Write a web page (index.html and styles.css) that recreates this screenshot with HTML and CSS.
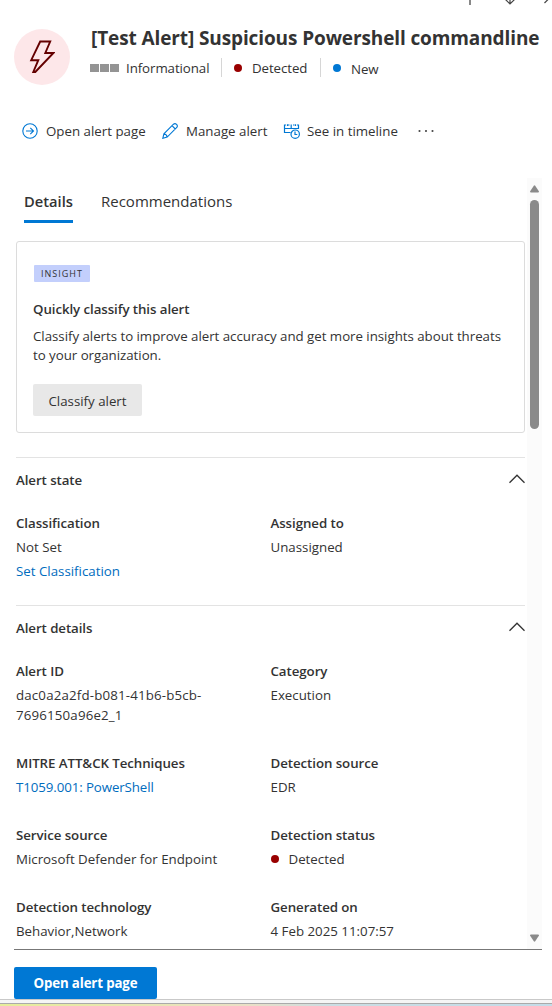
FILE: index.html
```
<!DOCTYPE html>
<html lang="en">
<head>
<meta charset="utf-8">
<title>Suspicious Powershell commandline</title>
<link rel="stylesheet" href="styles.css">
</head>
<body>
<div class="panel">
  <svg class="panel-nav" width="552" height="8" viewBox="0 0 552 8" fill="none" stroke="#444" stroke-width="1.2">
    <path d="M470 0V5" stroke="#888" stroke-width="2"/><path d="M505.500 -.5L510 4L514.500 -.5M510 0V4"/><path d="M544.500 3L549 -1.500"/>
  </svg>
  <header class="header">
    <div class="avatar">
      <svg width="26" height="34" viewBox="0 0 26 34" fill="none" stroke="#640000" stroke-width="1.9">
        <path d="M11.200 1.500H21.200L16.300 13H24.400L6.300 32H4.300L9.300 20.200H2.200Z"/>
      </svg>
    </div>
    <div class="heading">
      <h1 class="title">[Test Alert] Suspicious Powershell commandline</h1>
      <div class="meta">
        <span class="severity"><i></i><i></i><i></i></span>
        <span class="meta-info">Informational</span>
        <span class="meta-item detected"><i class="dot red"></i>Detected</span>
        <span class="meta-item new"><i class="dot blue"></i><span class="new-label">New</span></span>
      </div>
    </div>
  </header>
  <nav class="commands">
    <a class="command open">
      <svg width="16" height="16" viewBox="0 0 16 16" fill="none" stroke="#0078d4" stroke-width="1.100"><circle cx="8" cy="8" r="7.200"/><path d="M4 8H11.300M8.300 4.800L11.500 8L8.300 11.200"/></svg>
      <span>Open alert page</span>
    </a>
    <a class="command manage">
      <svg width="16" height="16" viewBox="0 0 16 16" fill="none" stroke="#0078d4" stroke-width="1.100"><path d="M.8 15.300L1.900 10.800L11.500 1.200Q13 0 14.600 1.400Q16 3 14.800 4.500L5.200 14.100ZM10 2.700L13.300 6M1.900 10.800Q4.800 11.200 5.200 14.100"/></svg>
      <span>Manage alert</span>
    </a>
    <a class="command timeline">
      <svg width="17" height="16" viewBox="0 0 17 16" fill="none" stroke="#0078d4" stroke-width="1.200"><path d="M7.500 9.500H1.500V2H3M1.500 5.500H15.500V2H14M5 2H6.500M10 2H11.500M8.200 1.500V5.500M4.500 1.200V3M12.500 1.200V3"/><circle cx="12.200" cy="11.200" r="4.200"/><path d="M12 8.500V11.500H14.300"/></svg>
      <span>See in timeline</span>
    </a>
    <svg class="more" width="16" height="4" viewBox="0 0 16 4" fill="#444"><circle cx="1.500" cy="2" r="1.050"/><circle cx="8" cy="2" r="1.050"/><circle cx="14.500" cy="2" r="1.050"/></svg>
  </nav>
  <div class="scroller">
    <main class="content">
      <div class="tabs"><a class="tab active">Details</a><a class="tab">Recommendations</a></div>
      <section class="card">
        <span class="badge">INSIGHT</span>
        <h2 class="card-title">Quickly classify this alert</h2>
        <p class="card-text">Classify alerts to improve alert accuracy and get more insights about threats<br>to your organization.</p>
        <button class="secondary">Classify alert</button>
      </section>
      <section class="section state">
        <div class="section-head"><h2>Alert state</h2><svg width="16" height="10" viewBox="0 0 16 10" fill="none" stroke="#333" stroke-width="1.300"><path d="M.5 8.700L8 1.200L15.500 8.700"/></svg></div>
        <dl class="fields">
          <div><dt>Classification</dt><dd>Not Set</dd><dd><a class="link">Set Classification</a></dd></div>
          <div><dt>Assigned to</dt><dd>Unassigned</dd></div>
        </dl>
      </section>
      <section class="section">
        <div class="section-head"><h2>Alert details</h2><svg width="16" height="10" viewBox="0 0 16 10" fill="none" stroke="#333" stroke-width="1.300"><path d="M.5 8.700L8 1.200L15.500 8.700"/></svg></div>
        <dl class="fields">
          <div><dt>Alert ID</dt><dd class="alert-id">dac0a2a2fd-b081-41b6-b5cb-<br>7696150a96e2_1</dd></div>
          <div><dt>Category</dt><dd>Execution</dd></div>
          <div><dt>MITRE ATT&amp;CK Techniques</dt><dd><a class="link technique">T1059.001: PowerShell</a></dd></div>
          <div><dt>Detection source</dt><dd>EDR</dd></div>
          <div><dt>Service source</dt><dd>Microsoft Defender for Endpoint</dd></div>
          <div><dt>Detection status</dt><dd class="status"><i class="dot red"></i>Detected</dd></div>
          <div><dt>Detection technology</dt><dd>Behavior,Network</dd></div>
          <div><dt>Generated on</dt><dd>4 Feb 2025 11:07:57</dd></div>
        </dl>
      </section>
    </main>
    <div class="scrollbar">
      <svg width="9" height="8" viewBox="0 0 9 8" fill="#8a8a8a"><path d="M3.800 .7Q4.500 0 5.200 .7L9 6.500Q9 7.500 8 7.500H1Q0 7.500 0 6.500Z"/></svg>
      <div class="thumb"></div>
      <svg class="down" width="9" height="8" viewBox="0 0 9 8" fill="#8a8a8a"><path d="M3.800 7.300Q4.500 8 5.200 7.300L9 1.500Q9 .5 8 .5H1Q0 .5 0 1.500Z"/></svg>
    </div>
  </div>
  <footer class="footer"><button class="primary">Open alert page</button></footer>
  <div class="edge"></div>
</div>
</body>
</html>
```
FILE: styles.css
```
* { box-sizing: border-box; }
body { margin: 0; background: #fff; color: #333; font: 13.3px/20px "Open Sans", sans-serif; }
h1, h2, p, dl, dd { margin: 0; }
svg { display: block; flex: none; }
button { border: 0; border-radius: 2px; font: inherit; padding: 0; color: inherit; }
.panel { width: 552px; height: 1006px; display: flex; flex-direction: column; overflow: hidden; }
.panel-nav { height: 8px; }
.header { display: flex; gap: 20px; padding: 17px 0 0 14px; height: 98px; }
.avatar { display: flex; align-items: center; justify-content: center; width: 56px; height: 56px; margin-top: 4px; border-radius: 50%; background: #fde7e9; flex: none; }
.heading { white-space: nowrap; }
.title { padding-left: 1px; font-size: 19px; line-height: 26px; font-weight: 700; letter-spacing: -0.11px; }
.meta { display: flex; align-items: center; height: 19px; margin-top: 7px; letter-spacing: -0.08px; }
.severity { display: flex; gap: 1px; width: 36px; }
.severity i { width: 9px; height: 8px; margin-top: 1px; background: #949494; }
.meta-info { width: 95px; }
.meta-item { display: flex; align-items: center; height: 19px; border-left: 1px solid #d6d6d6; padding-left: 12px; }
.detected { width: 99px; }
.dot { width: 8px; height: 8px; border-radius: 50%; margin-right: 10px; flex: none; }
.red { background: #990000; }
.blue { background: #0078d4; }
.new-label { padding-top: 2px; }
.commands { display: flex; align-items: center; height: 50px; padding-left: 22px; white-space: nowrap; }
.command { display: flex; align-items: center; gap: 8px; }
.open { width: 140px; }
.manage { width: 121px; }
.timeline { width: 135px; gap: 7px; }
.scroller { display: flex; height: 772px; margin: 22px 10px 0 14px; border-bottom: 1px solid #777; }
.content { width: 511px; padding-left: 2px; margin-right: 2px; }
.tabs { display: flex; gap: 27px; padding: 8px 0 0 8px; height: 63px; font-size: 15px; line-height: 31px; }
.tab { height: 37px; }
.active { width: 49px; font-weight: 600; font-size: 14.7px; border-bottom: 3px solid #0078d4; }
.tab + .tab { padding-left: 1px; }
.card { border: 1px solid #dcdcdc; border-radius: 3px; height: 192px; padding: 23px 0 0 16px; }
.badge { display: block; width: 56px; height: 17px; margin-left: 1px; background: #c3cffc; border-radius: 1px; text-align: center; font-size: 9px; line-height: 17px; letter-spacing: 1px; }
.card-title { margin-top: 17px; font-size: 13.300px; line-height: 20px; font-weight: 600; letter-spacing: -0.08px; }
.card-text { margin-top: 8px; line-height: 19px; white-space: nowrap; letter-spacing: -0.03px; }
.secondary { display: block; width: 109px; height: 32px; padding-top: 2px; margin-top: 19px; background: #e8e8e8; }
.section { border-top: 1px solid #e3e3e3; }
.state { height: 148px; margin-top: 24px; }
.section-head { display: flex; justify-content: space-between; height: 53px; padding-top: 12px; }
.section-head h2 { font-size: 13.300px; line-height: 20px; font-weight: 600; letter-spacing: -0.08px; }
.section-head svg { margin-top: 4px; }
.fields { display: grid; grid-template-columns: 1fr 1fr; row-gap: 24px; white-space: nowrap; }
dt { font-weight: 600; line-height: 24px; letter-spacing: -0.07px; }
dd { padding: 2px 0; }
.alert-id { letter-spacing: 0.16px; }
.alert-id::first-line { letter-spacing: 0.16px; }
.link { color: #006cbe; }
.technique { letter-spacing: -0.1px; }
.status { display: flex; align-items: center; }
.scrollbar { width: 15px; background: #fbfbfb; display: flex; flex-direction: column; align-items: center; padding: 7px 0; }
.thumb { width: 9px; height: 229px; margin-top: 7px; border-radius: 5px; background: #8a8a8a; }
.down { margin-top: auto; }
.footer { padding: 17px 0 0 14px; height: 49px; }
.primary { display: block; width: 143px; height: 32px; background: #0078d4; color: #fff; font-weight: 700; letter-spacing: -0.15px; }
.edge { height: 7px; border-top: 1px solid #c9c9c9; background: linear-gradient(#aaa, #aaa) 0 3px / 100% 1px no-repeat, linear-gradient(90deg, #e6ed9a, #eadfc6 45%, #cbdde3 60%, #c4dce8) 0 4px / 100% 2px no-repeat, #f5f5f5; }
```
